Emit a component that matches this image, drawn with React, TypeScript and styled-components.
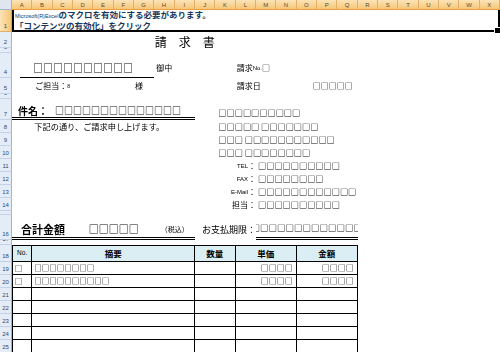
import React from "react";
import styled, { createGlobalStyle, css } from "styled-components";

const GlobalStyle = createGlobalStyle`
  html, body {
    margin: 0;
    padding: 0;
    background: #fff;
  }
  body {
    width: 500px;
    height: 352px;
    overflow: hidden;
    font-family: "Noto Sans CJK JP", "Noto Sans", sans-serif;
    color: #000;
  }
`;

const COLS = "ABCDEFGHIJKLMNOPQRSTUVWX".split("");
// row 1..25 heights in px
const ROW_HEIGHTS = [22, 16, 5, 25, 16, 5, 21, 13, 13, 13, 13, 13, 13, 13, 4, 25, 5, 17, 13, 13, 13, 13, 13, 13, 13];

type Place = { $c: number; $s?: number; $r: number };

const place = css<Place>`
  grid-column: ${(p) => p.$c + 2} / span ${(p) => p.$s ?? 1};
  grid-row: ${(p) => p.$r + 1};
`;

// thin box glyphs get colour fringes otherwise
const greyText = css`
  filter: grayscale(1);
`;

const Sheet = styled.div`
  display: grid;
  grid-template-columns: 12px repeat(24, 1fr);
  grid-template-rows: 10px ${ROW_HEIGHTS.map((h) => h + "px").join(" ")};
  width: 500px;
  height: 352px;
  overflow: hidden;
  background: #fff;
`;

const Corner = styled.div`
  grid-column: 1;
  grid-row: 1;
  background: #dfe6ef;
  border-right: 1px solid #9eb6ce;
  border-bottom: 1px solid #9eb6ce;
  box-sizing: border-box;
`;

const ColHead = styled.div<{ $i: number }>`
  grid-column: ${(p) => p.$i + 2};
  grid-row: 1;
  display: flex;
  align-items: center;
  justify-content: center;
  background: linear-gradient(#fbe4b8, #f6c676);
  border-right: 1px solid #e2b067;
  border-bottom: 1px solid #ee9d40;
  box-sizing: border-box;
  font-family: "Liberation Sans", sans-serif;
  font-size: 6px;
  color: #5d4b33;
  line-height: 1;
`;

const RowHead = styled.div<{ $r: number; $sel?: boolean }>`
  grid-column: 1;
  grid-row: ${(p) => p.$r + 1};
  display: flex;
  align-items: flex-end;
  justify-content: center;
  overflow: hidden;
  box-sizing: border-box;
  background: ${(p) => (p.$sel ? "linear-gradient(90deg, #fbe4b8, #f6c676)" : "#e4ecf7")};
  border-right: 1px solid ${(p) => (p.$sel ? "#ee9d40" : "#9eb6ce")};
  border-bottom: 1px solid ${(p) => (p.$sel ? "#e2b067" : "#c3d3e7")};
  font-family: "Liberation Sans", sans-serif;
  font-size: 6px;
  line-height: 8px;
  color: #2f4a6e;
  padding-bottom: 1px;
`;

const Banner = styled.div`
  grid-column: 2 / 26;
  grid-row: 2;
  position: relative;
  box-sizing: border-box;
  border-left: 2px solid #000;
  border-right: 2px solid #000;
  border-bottom: 2px solid #000;
  padding-left: 1px;
  color: #17375e;
  font-weight: 700;
  font-size: 8.5px;
  line-height: 10px;
  white-space: nowrap;
`;

const BannerLine = styled.div`
  margin-top: -1px;
  height: 10px;
  & + & {
    margin-top: 1px;
  }
`;

const FillHandle = styled.span`
  position: absolute;
  right: -3px;
  bottom: -4px;
  width: 5px;
  height: 5px;
  background: #000;
  border: 1px solid #fff;
`;

const Latin = styled.span<{ $size?: number }>`
  font-family: "Liberation Sans", sans-serif;
  font-size: ${(p) => p.$size ?? 6}px;
  font-weight: 400;
`;

const Title = styled.div<Place>`
  ${place}
  display: flex;
  align-items: center;
  justify-content: center;
  padding-top: 4px;
  font-size: 12px;
  line-height: 1;
  white-space: nowrap;
  ${greyText}
`;

type TextProps = Place & {
  $size?: number;
  $bold?: boolean;
  $align?: "flex-start" | "center" | "flex-end";
  $pad?: string;
  $ml?: number;
  $line?: "single" | "double";
};

const Text = styled.div<TextProps>`
  ${place}
  display: flex;
  align-items: center;
  justify-content: ${(p) => p.$align ?? "flex-start"};
  box-sizing: border-box;
  padding: ${(p) => p.$pad ?? "0"};
  margin-left: ${(p) => p.$ml ?? 0}px;
  font-size: ${(p) => p.$size ?? 8}px;
  font-weight: ${(p) => (p.$bold ? 700 : 400)};
  line-height: 1;
  white-space: nowrap;
  min-width: 0;
  border-bottom: ${(p) =>
    p.$line === "double" ? "3px double #000" : p.$line === "single" ? "1px solid #000" : "none"};
  ${greyText}
`;

const Boxes = styled.span<{ $size: number; $gap?: number }>`
  font-size: ${(p) => p.$size}px;
  margin-left: ${(p) => p.$gap ?? 0}px;
`;

const PayStrip = styled.div<Place>`
  ${place}
  display: flex;
  align-items: center;
  justify-content: center;
  overflow: hidden;
  box-sizing: border-box;
  padding-top: 3px;
  border-bottom: 3px double #000;
  font-size: 8.5px;
  font-weight: 700;
  line-height: 1;
  white-space: nowrap;
  ${greyText}
`;

const HeadCell = styled.div<Place & { $first?: boolean }>`
  ${place}
  display: flex;
  align-items: center;
  justify-content: center;
  box-sizing: border-box;
  background: #daeef3;
  border-top: 1px solid #000;
  border-right: 1px solid #000;
  border-bottom: 1px solid #000;
  border-left: ${(p) => (p.$first ? "1px solid #000" : "none")};
  font-size: 8.5px;
  font-weight: 700;
  line-height: 1;
`;

const BodyCell = styled.div<Place & { $first?: boolean; $right?: boolean; $size?: number }>`
  ${place}
  display: flex;
  align-items: center;
  justify-content: ${(p) => (p.$right ? "flex-end" : "flex-start")};
  box-sizing: border-box;
  padding: ${(p) => (p.$right ? "0 3px 0 0" : "0 0 0 2px")};
  border-right: 1px solid #000;
  border-bottom: 1px solid #000;
  border-left: ${(p) => (p.$first ? "1px solid #000" : "none")};
  font-size: ${(p) => p.$size ?? 7.5}px;
  font-weight: 700;
  line-height: 1;
  white-space: nowrap;
  overflow: hidden;
  ${greyText}
`;

const TABLE_COLS = [
  { c: 0, s: 1, head: <Latin $size={6.5}>No.</Latin>, right: false, size: 7 },
  { c: 1, s: 8, head: "摘要", right: false, size: 7.5 },
  { c: 9, s: 2, head: "数量", right: true, size: 8 },
  { c: 11, s: 3, head: "単価", right: true, size: 8 },
  { c: 14, s: 3, head: "金額", right: true, size: 8 },
];

const ITEMS = [
  ["□", "□□□□□□□□", "", "□□□□", "□□□□"],
  ["□", "□□□□□□□□□□", "", "□□□□", "□□□□"],
  ["", "", "", "", ""],
  ["", "", "", "", ""],
  ["", "", "", "", ""],
  ["", "", "", "", ""],
  ["", "", "", "", ""],
];

const ISSUER = [
  { r: 7, v: "□□□□□□□□□□" },
  { r: 8, v: "□□□□□ □□□□□□□" },
  { r: 9, v: "□□□ □□□□□□□□□□□" },
  { r: 10, v: "□□□ □□□□□□□□" },
];

const CONTACT = [
  { r: 11, label: <><Latin>TEL</Latin>：</>, v: "□□□□□□□□□□" },
  { r: 12, label: <><Latin>FAX</Latin>：</>, v: "□□□□□□□□" },
  { r: 13, label: <><Latin>E-Mail</Latin>：</>, v: "□□□□□□□□□□□□" },
  { r: 14, label: "担当：", v: "□□□□□□□□□□" },
];

export default function App() {
  return (
    <>
      <GlobalStyle />
      <Sheet>
        <Corner />
        {COLS.map((l, i) => (
          <ColHead key={l} $i={i}>
            {l}
          </ColHead>
        ))}
        {ROW_HEIGHTS.map((_, i) => (
          <RowHead key={i} $r={i + 1} $sel={i === 0}>
            {i + 1}
          </RowHead>
        ))}

        <Banner>
          <BannerLine>
            <Latin $size={5.5}>Microsoft(R)Excel</Latin>のマクロを有効にする必要があります。
          </BannerLine>
          <BannerLine>「コンテンツの有効化」をクリック</BannerLine>
          <FillHandle />
        </Banner>

        <Title $c={6} $s={5} $r={2}>
          請　求　書
        </Title>

        {/* addressee */}
        <Text $c={0} $s={7} $r={4} $ml={8} $pad="5px 0 0 13px" $size={10} $bold $line="single">
          □□□□□□□□□□
        </Text>
        <Text $c={7} $s={2} $r={4} $pad="5px 0 0 2px">
          御中
        </Text>
        <Text $c={11} $s={3} $r={4} $pad="5px 0 0 1px">
          請求<Latin>No.</Latin>□
        </Text>

        <Text $c={1} $s={4} $r={5} $pad="0 0 0 3px">
          ご担当：<Latin $size={5}>8</Latin>
        </Text>
        <Text $c={6} $r={5} $pad="0 0 0 1px">
          様
        </Text>
        <Text $c={11} $s={2} $r={5} $pad="0 0 0 1px">
          請求日
        </Text>
        <Text $c={14} $s={3} $r={5} $align="flex-end" $pad="0 5px 0 0" $bold>
          □□□□□
        </Text>

        {/* subject */}
        <Text $c={0} $s={9} $r={7} $pad="5px 0 0 6px" $size={10} $bold $line="double">
          件名：<Boxes $size={9} $gap={7}>□□□□□□□□□□□□□□</Boxes>
        </Text>
        <Text $c={1} $s={8} $r={8} $pad="0 0 0 2px" $size={8.2}>
          下記の通り、ご請求申し上げます。
        </Text>

        {/* issuer block */}
        {ISSUER.map((row) => (
          <Text
            key={row.r}
            $c={10}
            $s={8}
            $r={row.r}
            $pad={row.r === 7 ? "5px 0 0 3px" : "0 0 0 3px"}
            $size={8.2}
            $bold
          >
            {row.v}
          </Text>
        ))}
        {CONTACT.map((row) => (
          <React.Fragment key={row.r}>
            <Text $c={10} $s={2} $r={row.r} $align="flex-end">
              {row.label}
            </Text>
            <Text $c={12} $s={7} $r={row.r} $pad="0 0 0 2px" $size={8.2} $bold>
              {row.v}
            </Text>
          </React.Fragment>
        ))}

        {/* totals */}
        <Text $c={0} $s={9} $r={16} $line="double" />
        <Text $c={0} $s={3} $r={16} $pad="3px 0 0 9px" $size={11} $bold>
          合計金額
        </Text>
        <Text $c={3} $s={4} $r={16} $align="center" $pad="3px 0 0 0" $size={10} $bold>
          □□□□□
        </Text>
        <Text $c={7} $s={2} $r={16} $align="center" $pad="3px 0 0 0" $size={7}>
          （税込）
        </Text>
        <Text $c={9} $s={3} $r={16} $align="flex-end" $pad="3px 0 0 0" $size={9}>
          お支払期限：
        </Text>
        <PayStrip $c={12} $s={5} $r={16}>
          □□□□□□□□□□□□□
        </PayStrip>

        {/* item table */}
        {TABLE_COLS.map((col, i) => (
          <HeadCell key={i} $c={col.c} $s={col.s} $r={18} $first={i === 0}>
            {col.head}
          </HeadCell>
        ))}
        {ITEMS.map((item, ri) =>
          TABLE_COLS.map((col, ci) => (
            <BodyCell
              key={`${ri}-${ci}`}
              $c={col.c}
              $s={col.s}
              $r={19 + ri}
              $first={ci === 0}
              $right={col.right}
              $size={col.size}
            >
              {item[ci]}
            </BodyCell>
          ))
        )}
      </Sheet>
    </>
  );
}
